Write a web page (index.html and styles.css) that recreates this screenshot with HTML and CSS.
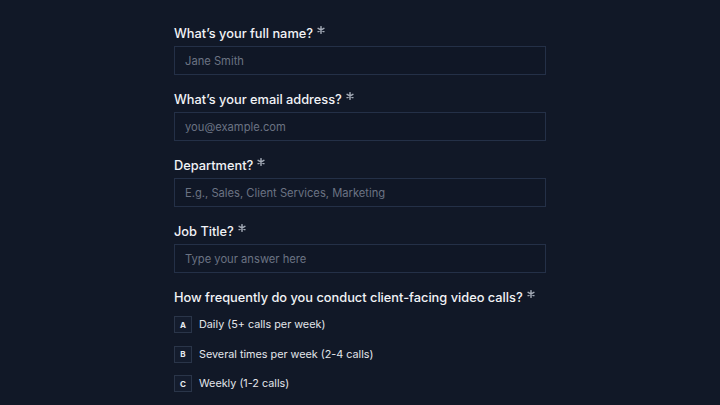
FILE: index.html
```html
<!DOCTYPE html>
<html lang="en">
<head>
<meta charset="utf-8">
<link rel="stylesheet" href="styles.css">
</head>
<body>
<form class="form">
  <div class="field">
    <label class="label">What’s your full name? <svg class="req" viewBox="0 0 10 10"><path d="M5 0.8V9.2M1.4 2.9L8.6 7.1M1.4 7.1L8.6 2.9"/></svg></label>
    <div class="input">Jane Smith</div>
  </div>
  <div class="field">
    <label class="label">What’s your email address? <svg class="req" viewBox="0 0 10 10"><path d="M5 0.8V9.2M1.4 2.9L8.6 7.1M1.4 7.1L8.6 2.9"/></svg></label>
    <div class="input">you@example.com</div>
  </div>
  <div class="field">
    <label class="label">Department? <svg class="req" viewBox="0 0 10 10"><path d="M5 0.8V9.2M1.4 2.9L8.6 7.1M1.4 7.1L8.6 2.9"/></svg></label>
    <div class="input">E.g., Sales, Client Services, Marketing</div>
  </div>
  <div class="field">
    <label class="label">Job Title? <svg class="req" viewBox="0 0 10 10"><path d="M5 0.8V9.2M1.4 2.9L8.6 7.1M1.4 7.1L8.6 2.9"/></svg></label>
    <div class="input">Type your answer here</div>
  </div>
  <div class="field">
    <label class="label">How frequently do you conduct client-facing video calls? <svg class="req" viewBox="0 0 10 10"><path d="M5 0.8V9.2M1.4 2.9L8.6 7.1M1.4 7.1L8.6 2.9"/></svg></label>
    <div class="options">
      <div class="option"><span class="key">A</span><span class="opt-text">Daily (5+ calls per week)</span></div>
      <div class="option"><span class="key">B</span><span class="opt-text">Several times per week (2-4 calls)</span></div>
      <div class="option"><span class="key">C</span><span class="opt-text">Weekly (1-2 calls)</span></div>
    </div>
  </div>
</form>
</body>
</html>
```
FILE: styles.css
```css
html, body {
  margin: 0;
  padding: 0;
  background: #111827;
  height: 100%;
  overflow: hidden;
}
body {
  font-family: Inter, "DejaVu Sans", sans-serif;
  color: #f1f3f6;
}
.form {
  width: 372px;
  margin-left: 174px;
  padding-top: 25px;
  display: flex;
  flex-direction: column;
  gap: 16px;
}
.field {
  display: flex;
  flex-direction: column;
  gap: 3px;
}
.label {
  font-size: 12.8px;
  font-weight: 500;
  line-height: 18px;
  display: flex;
  align-items: flex-start;
}
.req {
  width: 8px;
  height: 8px;
  margin-left: 4px;
  margin-top: 1px;
  stroke: #a3aab6;
  stroke-width: 1.8;
  stroke-linecap: round;
  fill: none;
}
.input {
  box-sizing: border-box;
  height: 29px;
  border: 1px solid #243047;
  background: #101726;
  padding: 0 10px;
  display: flex;
  align-items: center;
  font-size: 11.2px;
  color: #6b7383;
}
.options {
  margin-top: 6px;
  display: flex;
  flex-direction: column;
  gap: 12.5px;
}
.option {
  display: flex;
  align-items: center;
  height: 17px;
}
.key {
  box-sizing: border-box;
  width: 18px;
  height: 17px;
  border: 1px solid #2a3549;
  background: #141c2d;
  display: flex;
  align-items: center;
  justify-content: center;
  font-size: 8px;
  font-weight: 700;
  color: #e8ebf0;
}
.opt-text {
  margin-left: 7px;
  font-size: 10.8px;
  color: #e3e6eb;
}
```
